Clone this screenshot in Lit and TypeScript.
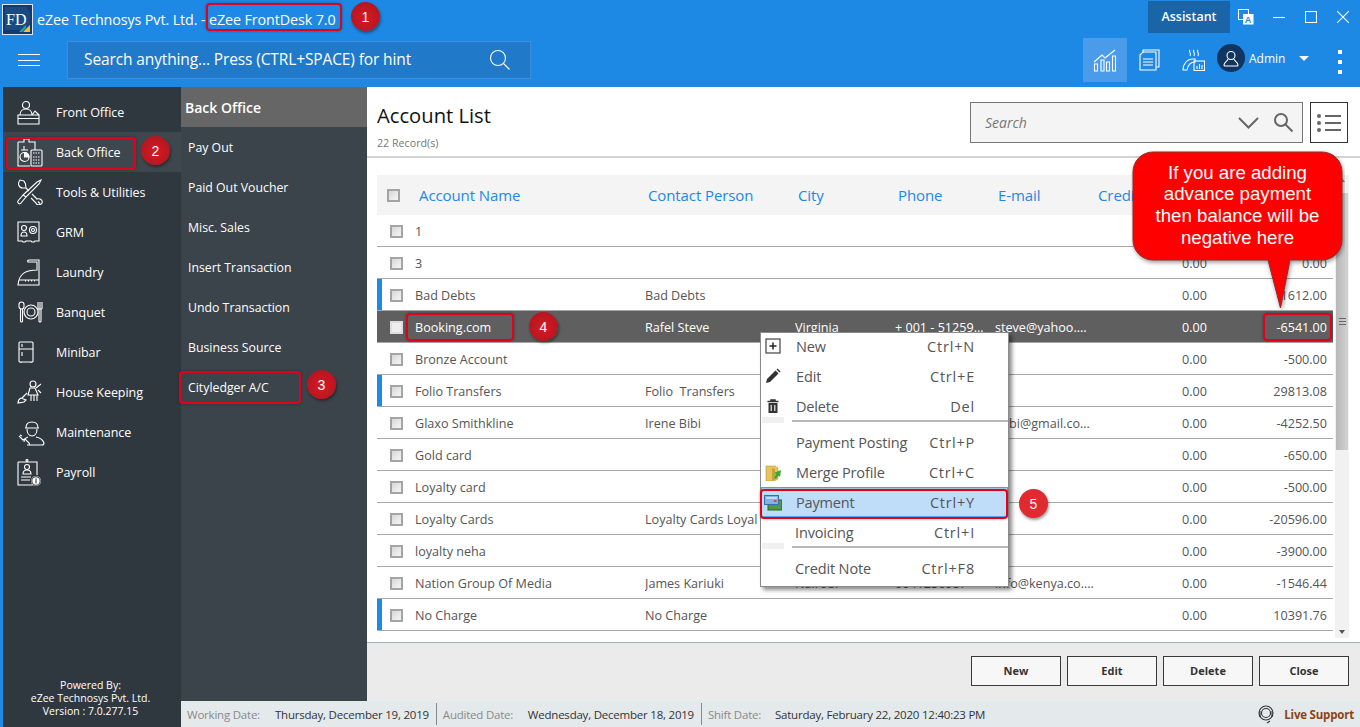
import { LitElement, html, css, svg } from "lit";
import { customElement } from "lit/decorators.js";

const I = (w: number, h: number, body: unknown, cls = "ic") =>
  html`<svg class=${cls} width=${w} height=${h} viewBox="0 0 ${w} ${h}">${body}</svg>`;

const navIcons: Record<string, unknown> = {
  front: svg`<circle cx="9" cy="5" r="3.500"/><path d="M3 15c0-4 3-6 6-6s6 2 6 6M15 15l3-4 4 4M1 15h21v9H1zM1 18.500h21"/>`,
  back: svg`<path d="M1 5h6V2h5v3h6v8M1 5v24h12M4 13h7M7 9v4"/><circle cx="7.500" cy="20" r="4.500"/><path d="M7.500 20v-4.500a4.500 4.500 0 0 1 4.500 4.500z" fill="#fff"/><rect x="14" y="13" width="11" height="16" rx="1"/><path d="M16 16h7M16 20h7M16 23h7M16 26h7" stroke-dasharray="1.500 1"/>`,
  tools: svg`<path d="M7 2 3 1C0 5 2 9 6 9l3 0 3 3M15 15l5 5c3-1 6 1 5 4-1 2-5 3-6 0l-5-5M21 22.500l2 2M9 9l-.5-4L7 2"/><path d="M24 1l-2 4L9 18l-3-2L20 3zM9 18l-5 6c-1 2-4 0-3-2l5-6"/>`,
  grm: svg`<path d="M1 2h21v19h-4l-1 1h-2l-1-1H9l-1 1H6l-1-1H1z"/><circle cx="7" cy="8" r="2.500"/><path d="M4 16c0-3 1-4 3-4s3 1 3 4zM4 16h6"/><circle cx="16" cy="10" r="3.500"/><circle cx="16" cy="10" r="1.500"/>`,
  laundry: svg`<path d="M12 2h10v17M12 2c-1 0-2 1-1 2h9v8c-9 0-18 2-19 15h21v-8"/><path d="M2 22h20M8 23h1M11 23h1M14 23h1M17 23h1"/>`,
  banquet: svg`<rect x="2" y="1" width="5" height="7" rx="2.500"/><path d="M3.500 8v12a1 1 0 0 0 2 0V8"/><circle cx="14" cy="11" r="7"/><circle cx="14" cy="11" r="4"/><path d="M21 1v7M23 1v7M25 1v7M21 8h4M22 8v12a1 1 0 0 0 2 0V8"/>`,
  minibar: svg`<rect x="2" y="1" width="14" height="20" rx="1"/><path d="M2 8h14M5 3v3M5 11v4M4 21v1M14 21v1"/>`,
  house: svg`<circle cx="16" cy="5" r="3"/><path d="M13 9l-2 7h10l-3-7zM19 9l5-4M21 11l3 3M10 14l-5 5M4 19c-2 1-3 3-3 5l6-1 2-2zM14 16v6M17 16v6M20 16v6"/>`,
  maint: svg`<path d="M9 9c0-4 2-6 6-6s6 2 6 6M8 9h14M10 10c0 4 2 7 5 7s5-3 5-7"/><path d="M11 18c-3 1-4 3-4 5M19 18c5 1 7 3 8 6 0 1-1 2-2 2H10"/><path d="M2 17l4 4 2-1 4 4c1 1 1 1 0 2M5 17l-2-1"/>`,
  payroll: svg`<path d="M1 3h19v13M1 3v23h15"/><circle cx="10" cy="1.500" r="1"/><circle cx="10" cy="8" r="2.500"/><path d="M6 15c0-3 1-4 4-4s4 1 4 4zM4 18h10M4 21h9"/><circle cx="19" cy="22" r="5" fill="#fff" stroke="none"/><circle cx="19" cy="22" r="4.200" stroke="#30383f"/><path d="M19 19.500v5" stroke="#30383f"/>`,
};

const nav = [
  ["Front Office", "front", 24, 25],
  ["Back Office", "back", 26, 30],
  ["Tools & Utilities", "tools", 26, 26],
  ["GRM", "grm", 24, 24],
  ["Laundry", "laundry", 24, 28],
  ["Banquet", "banquet", 26, 22],
  ["Minibar", "minibar", 18, 23],
  ["House Keeping", "house", 26, 26],
  ["Maintenance", "maint", 28, 27],
  ["Payroll", "payroll", 26, 27],
] as [string, string, number, number][];

const subs = ["Pay Out", "Paid Out Voucher", "Misc. Sales", "Insert Transaction", "Undo Transaction", "Business Source", "Cityledger A/C"];

type Row = { n: string; c?: string; ci?: string; p?: string; e?: string; cr: string; b: string; flag?: boolean; sel?: boolean };
const rows: Row[] = [
  { n: "1", cr: "", b: "" },
  { n: "3", cr: "0.00", b: "0.00" },
  { n: "Bad Debts", c: "Bad Debts", cr: "0.00", b: "-1612.00", flag: true },
  { n: "Booking.com", c: "Rafel Steve", ci: "Virginia", p: "+ 001 - 51259...", e: "steve@yahoo....", cr: "0.00", b: "-6541.00", sel: true },
  { n: "Bronze Account", cr: "0.00", b: "-500.00" },
  { n: "Folio Transfers", c: "Folio  Transfers", cr: "0.00", b: "29813.08", flag: true },
  { n: "Glaxo Smithkline", c: "Irene Bibi", e: "ibibi@gmail.co...", cr: "0.00", b: "-4252.50" },
  { n: "Gold card", cr: "0.00", b: "-650.00" },
  { n: "Loyalty card", cr: "0.00", b: "-500.00" },
  { n: "Loyalty Cards", c: "Loyalty Cards Loyal", cr: "0.00", b: "-20596.00" },
  { n: "loyalty neha", cr: "0.00", b: "-3900.00" },
  { n: "Nation Group Of Media", c: "James Kariuki", ci: "Nairobi", p: "0041256987", e: "info@kenya.co....", cr: "0.00", b: "-1546.44" },
  { n: "No Charge", c: "No Charge", cr: "0.00", b: "10391.76", flag: true },
];

const menuIcons = {
  new: svg`<rect x="1" y="1" width="14" height="14" fill="#fafafa" stroke="#444" stroke-width="1.200"/><path d="M8 4.500v7M4.500 8h7" stroke="#222" stroke-width="1.500"/>`,
  edit: svg`<path d="M1 15l1-4 8.500-8.500 3 3L5 14z" fill="#333"/><path d="M11.500 1.500l1-1 3 3-1 1z" fill="#333"/>`,
  del: svg`<path d="M1.500 3.500h11M5 3.500V2h4v1.500" stroke="#333" stroke-width="1.500" fill="none"/><path d="M2.500 5h9v10h-9z" fill="#333"/><path d="M5.200 7v6M8.800 7v6" stroke="#eee" stroke-width="1.200"/>`,
  merge: svg`<path d="M1 3h9l3 2v11l-4 2H1z" fill="#e6c35c" stroke="#b99a3a" stroke-width=".6"/><path d="M7 5l3 1v11l-3 1z" fill="#c9a23c"/><path d="M9 15l2-4-2-1 7-3-1 7-1.500-1.500L11 16z" fill="#3fa535"/>`,
  pay: svg`<rect x="4" y="6" width="14" height="10" fill="#4f9a4a" stroke="#1f6a27"/><rect x="0.500" y="1.500" width="14" height="9" fill="#7fb2e6" stroke="#3a6ea8"/><path d="M2 4h11" stroke="#dfeaf7" stroke-width="1.500"/><rect x="10" y="6" width="2.500" height="2" fill="#d4493a"/>`,
};

const menu = [
  { t: "New", k: "Ctrl+N", i: menuIcons.new, w: 16, h: 16 },
  { t: "Edit", k: "Ctrl+E", i: menuIcons.edit, w: 16, h: 16 },
  { t: "Delete", k: "Del", i: menuIcons.del, w: 14, h: 16, sep: true },
  { t: "Payment Posting", k: "Ctrl+P" },
  { t: "Merge Profile", k: "Ctrl+C", i: menuIcons.merge, w: 17, h: 18 },
  { t: "Payment", k: "Ctrl+Y", i: menuIcons.pay, w: 18, h: 17, on: true },
  { t: "Invoicing", k: "Ctrl+I", sep: true, shift: true },
  { t: "Credit Note", k: "Ctrl+F8", shift: true },
] as any[];

const marks = [
  ["m1", 1],
  ["m2", 2],
  ["m3", 3],
  ["m4", 4],
  ["m5", 5],
] as [string, number][];

@customElement("app-root")
export class AppRoot extends LitElement {
  static styles = css`
    :host { display: block; position: relative; width: 1360px; height: 727px; overflow: hidden;
      font-family: "Open Sans", "Noto Sans", sans-serif; font-size: 12px; color: #555; background: #fff; }
    * { box-sizing: border-box; }
    .ic { fill: none; stroke: #fff; stroke-width: 1.100; display: block; flex: none; }

    .titlebar { height: 38px; background: #1e88e5; display: flex; align-items: center; color: #fff; padding-left: 2px; }
    .logo { width: 31px; height: 31px; margin-right: 4px; flex: none; }
    .ttl { font-size: 14.300px; letter-spacing: -0.100px; white-space: pre; }
    .grow { flex: 1; }
    .assist { width: 82px; height: 32px; background: #1a65a8; font-size: 12.500px; font-weight: 600; display: flex; align-items: center; justify-content: center; margin-top: -5px; }
    .win { display: flex; align-items: center; margin-top: -5px; }
    .tr { margin: 0 19px 0 8px; }
    .win .ic { margin-right: 20px; }
    .win .ic:last-child { margin-right: 11px; }

    .toolbar { height: 49px; background: #1e88e5; display: flex; align-items: flex-start; color: #fff; }
    .burger { width: 22px; height: 12px; margin: 16px 27px 0 18px; border-top: 1px solid #fff; border-bottom: 1px solid #fff; position: relative; flex: none; }
    .burger::after { content: ""; position: absolute; left: 0; right: 0; top: 4.500px; height: 1px; background: #fff; }
    .search { width: 464px; height: 38px; margin-top: 3px; background: #2079c9; border: 1px solid #3b8fdc; display: flex; align-items: center; padding: 0 19px 0 16px; font-size: 15.500px; letter-spacing: -0.120px; }
    .search span { flex: 1; margin-top: -2px; }
    .tools { display: flex; align-items: flex-start; }
    .tb { width: 44px; height: 44px; display: flex; align-items: center; justify-content: center; }
    .tb.on { background: #4a9ceb; }
    .avatar { width: 28px; height: 28px; border-radius: 50%; background: #0f3560; display: flex; align-items: center; justify-content: center; margin: 6px 4px 0 2px; }
    .admin { font-size: 12px; margin: 12px 0 0 0; width: 50px; }
    .caret { width: 0; height: 0; border: 5px solid transparent; border-top: 5px solid #fff; border-bottom: 0; margin: 18px 0 0 0; }
    .dots { display: flex; flex-direction: column; gap: 6px; margin: 12px 18px 0 29px; }
    .dots i { width: 4px; height: 4px; background: #fff; display: block; }

    .body { display: flex; height: 640px; }
    .side { width: 181px; background: #30383f; border-left: 3px solid #1e88e5; color: #fff; display: flex; flex-direction: column; padding-top: 5px; flex: none; }
    .nav { height: 40px; display: flex; align-items: center; font-size: 12.500px; letter-spacing: -0.050px; position: relative; }
    .nav.on { background: #3f474e; box-shadow: -1px 0 0 #1e88e5; }
    .nav .slot { width: 53px; padding-left: 14px; display: flex; align-items: center; flex: none; }
    .foot { margin-top: auto; text-align: center; font-size: 10.500px; line-height: 13px; padding: 0 0 9px; margin-left: -3px; }

    .right { flex: 1; display: flex; flex-direction: column; min-width: 0; }
    .work { display: flex; height: 614px; }
    .sub { width: 186px; background: #3c444b; color: #fff; flex: none; }
    .subh { height: 40px; background: #666; font-size: 14px; font-weight: 600; display: flex; align-items: center; padding-left: 4px; }
    .subi { height: 40px; display: flex; align-items: center; padding-left: 7px; font-size: 12.300px; }

    .main { flex: 1; display: flex; flex-direction: column; min-width: 0; background: #fff; }
    .mh { height: 71px; border-bottom: 2px solid #d4d4d4; display: flex; padding: 15px 12px 0 10px; flex: none; }
    .mt { flex: 1; }
    .h1 { font-size: 20.200px; line-height: 26px; color: #111; margin: 0; font-weight: 400; }
    .rec { font-size: 10.700px; color: #777; margin-top: 8px; }
    .sbox { width: 333px; height: 41px; background: #f4f4f4; border: 1px solid #777; display: flex; align-items: center; padding: 0 8px 0 14px; font-style: italic; font-size: 14px; color: #777; }
    .sbox span { flex: 1; }
    .sbox .ic { stroke: #666; stroke-width: 2; }
    .lst { width: 38px; height: 41px; border: 1px solid #333; margin-left: 7px; display: flex; align-items: center; justify-content: center; }

    .tw { flex: 1; display: flex; padding: 17px 12px 0 10px; min-height: 0; gap: 2px; }
    .tbl { width: 956px; flex: none; }
    .row { display: grid; grid-template-columns: 38px 230px 150px 100px 100px 100px 112px 120px 6px; height: 32px; align-items: center; padding-top: 1px; border-bottom: 1px solid #a8a8a8; white-space: pre; font-size: 12.600px; color: #555; }
    .row.head { height: 40px; padding-top: 0; background: #f4f4f4; border: 0; font-size: 15px; color: #1e88e5; letter-spacing: -0.100px; }
    .row.head .h { padding-left: 3px; overflow: hidden; }
    .row.head .h.f { padding-left: 4px; }
    .row.flag { box-shadow: inset 5px 0 0 #1e88e5; }
    .row.sel { background: #5f5f5f; color: #fff; }
    .r { text-align: right; }
    .cb { width: 13px; height: 13px; border: 2px solid #a4a4a4; background: linear-gradient(135deg, #d8d8d8, #f5f5f5); margin-left: 13px; display: block; }
    .head .cb { margin-left: 10px; }
    .sel .cb { border-color: #ddd; background: #eee; }
    .cell { overflow: hidden; }
    .sb { width: 14px; height: 463px; background: #f1f1f1; position: relative; flex: none; }
    .thumb { position: absolute; left: 1px; right: 1px; top: 18px; height: 257px; background: linear-gradient(90deg, #b8b8b8, #d2d2d2); display: flex; align-items: center; justify-content: center; }
    .grip { width: 7px; height: 7px; border-top: 1px solid #666; border-bottom: 1px solid #666; position: relative; }
    .grip::after { content: ""; position: absolute; left: 0; right: 0; top: 2px; height: 1px; background: #666; }
    .arr { position: absolute; left: 4px; width: 0; height: 0; border: 3px solid transparent; }
    .arr.up { top: 3px; border-bottom: 4px solid #888; border-top: 0; }
    .arr.dn { bottom: 4px; border-top: 4px solid #555; border-bottom: 0; }

    .bot { height: 59px; border-top: 1px solid #aab0b4; background: #ebebeb; display: flex; justify-content: flex-end; gap: 6px; padding: 13px 11px 0 0; flex: none; margin-top: auto; }
    .btn { width: 90px; height: 30px; background: #f7f7f7; border: 1px solid #3a3a3a; font-size: 11px; font-weight: 700; color: #333; display: flex; align-items: center; justify-content: center; padding-bottom: 2px; }

    .status { height: 26px; background: #e4e9ec; display: flex; align-items: center; font-size: 11.500px; color: #333; padding-left: 6px; white-space: nowrap; letter-spacing: -0.220px; }
    .status .lb { color: #8a8a8a; }
    .status .v1 { width: 88px; }
    .status .v2 { width: 85px; }
    .status .v3 { width: 67px; }
    .div { width: 1px; height: 22px; background: #888; margin: 0 6px 0 7px; }
    .ls { color: #8b4513; font-weight: 700; margin: 0 6px 0 9px; letter-spacing: -0.200px; }
    .status .ic { stroke: #333; }
    .status .lsi { margin-left: auto; }

    .menu { position: absolute; left: 760px; top: 332px; width: 249px; height: 255px; background: #fff; border: 1px solid #8a8a8a; box-shadow: 3px 3px 4px rgba(0,0,0,.45); display: flex; flex-direction: column; color: #555; font-size: 14.500px; }
    .mi { height: 30px; display: grid; grid-template-columns: 35px 1fr auto; align-items: center; padding-right: 33px; flex: none; letter-spacing: -0.150px; }
    .mi:first-child { margin-top: -2px; }
    .mi.on { background: #bfdcf8; box-shadow: inset 0 0 0 1px #5ba4ee; height: 30px; }
    .mi.shift { margin-left: -1px; }
    .mi .k { letter-spacing: 0.800px; }
    .mi .mic { display: flex; justify-content: center; padding-left: 2px; width: 22px; }
    .msep { height: 2px; margin: -1px 0 5px 31px; background: #b8b8b8; flex: none; position: relative; }
    .msep::before { content: ""; position: absolute; left: -30px; width: 22px; top: -3px; height: 6px; background: #f0f0f0; }

    .ann { position: absolute; border: 2px solid #e3001b; border-radius: 4px; pointer-events: none; box-shadow: 0 0 3px rgba(0,0,0,.35); }
    .a1 { left: 206px; top: 3px; width: 136px; height: 28px; }
    .a2 { left: 6px; top: 137px; width: 130px; height: 33px; }
    .a3 { left: 179px; top: 371px; width: 122px; height: 33px; }
    .a4 { left: 406px; top: 313px; width: 108px; height: 28px; }
    .a5 { left: 1263px; top: 313px; width: 69px; height: 28px; }
    .a6 { left: 760px; top: 489px; width: 248px; height: 30px; }
    .badge { position: absolute; width: 29px; height: 29px; border-radius: 50%; color: #fff; display: flex; align-items: center; justify-content: center; font-size: 14px; background: radial-gradient(circle at 50% 55%, #d81a22, #a81420); box-shadow: 1px 2px 3px rgba(0,0,0,.4); font-family: "Liberation Sans", sans-serif; }
    .m1 { left: 351px; top: 2px; }
    .m2 { left: 141px; top: 136px; }
    .m3 { left: 307px; top: 370px; }
    .m4 { left: 529px; top: 312px; }
    .m5 { left: 1019px; top: 489px; background: #e02a2f; }

    .callout { position: absolute; left: 1131px; top: 150px; width: 214px; height: 160px; }
    .cpath { fill: #f00; stroke: #8a3030; stroke-width: 1; filter: drop-shadow(1px 2px 2px rgba(0,0,0,.4)); }
    .ctext { position: absolute; left: 2px; top: 0px; width: 209px; height: 110px; display: flex; align-items: center; justify-content: center; text-align: center; color: #fff; font: 18.670px/21.700px "Liberation Sans", sans-serif; }
  `;

  render() {
    return html`
      <div class="titlebar">
        <svg class="logo" viewBox="0 0 31 31">
          <rect x=".5" y=".5" width="30" height="30" fill="#123a6b" stroke="#dfe8f2"/>
          <path d="M3 3h21l4 5v18H3z" fill="#1a4a82"/>
          <path d="M21 28l7-7v7z" fill="#e8c23a"/><path d="M17 28l7-7v3l-4 4z" fill="#2ba3a0"/>
          <text x="4" y="21" font-family="Liberation Serif" font-size="16" fill="#fff">FD</text>
        </svg>
        <span class="ttl">eZee Technosys Pvt. Ltd. - eZee FrontDesk 7.0</span>
        <span class="grow"></span>
        <div class="assist">Assistant</div>
        <div class="win">
          <svg class="tr" width="16" height="16" viewBox="0 0 16 16" >
            <rect x="0.500" y="0.500" width="10" height="10" fill="#1e88e5" stroke="#fff"/>
            <rect x="5" y="5" width="10.500" height="10.500" fill="#fff"/>
            <text x="6.800" y="14" font-size="9" font-family="Liberation Sans" font-weight="700" fill="#1e88e5">A</text>
          </svg>
          ${I(12, 12, svg`<path d="M0 6.500h12"/>`)}
          ${I(12, 12, svg`<rect x=".5" y=".5" width="11" height="11"/>`)}
          ${I(12, 12, svg`<path d="M0 0l12 12M12 0L0 12"/>`)}
        </div>
      </div>
      <div class="toolbar">
        <div class="burger"></div>
        <div class="search"><span>Search anything... Press (CTRL+SPACE) for hint</span>
          ${I(22, 22, svg`<circle cx="9" cy="9" r="7.500"/><path d="M14.500 14.500l6 6"/>`)}
        </div>
        <span class="grow"></span>
        <div class="tools">
          <div class="tb on">${I(24, 23, svg`<path d="M1 13L9 6l3 3 5-4 5-4"/><path d="M1.500 15h3v7h-3zM8 11h3v11H8zM13.500 13h3v9h-3zM19.500 7h3v15h-3z"/>`)}</div>
          <div class="tb">${I(21, 22, svg`<path d="M4 4V1h16v17h-3"/><path d="M4 3h13v18H1V6z"/><path d="M4 10h10M4 13h10M4 16h10"/>`)}</div>
          <div class="tb">${I(23, 22, svg`<path d="M8 1c-2 2 2 3 0 6M12 1c-2 2 2 3 0 6M16 1c-2 2 2 3 0 6"/><path d="M1 21c0-6 4-11 10-11h2v3c-4 0-7 3-8 8z"/><rect x="12" y="12" width="10.500" height="9.500"/><path d="M15 20v-3M17.500 20v-5M20 20v-4"/>`)}</div>
          <div class="avatar">${I(16, 17, svg`<circle cx="8" cy="5.500" r="4"/><path d="M5 9c0 2-4 3-4 6 0 1 1 1 1 1h12s1 0 1-1c0-3-4-4-4-6"/>`)}</div>
          <div class="admin">Admin</div>
          <div class="caret"></div>
          <div class="dots"><i></i><i></i><i></i></div>
        </div>
      </div>
      <div class="body">
        <div class="side">
          ${nav.map(([t, k, w, h]) => html`<div class="nav ${t === "Back Office" ? "on" : ""}">
            <div class="slot">${I(w, h, navIcons[k])}</div>${t}</div>`)}
          <div class="foot">Powered By:<br />eZee Technosys Pvt. Ltd.<br />Version : 7.0.277.15</div>
        </div>
        <div class="right">
          <div class="work">
            <div class="sub">
              <div class="subh">Back Office</div>
              ${subs.map((s) => html`<div class="subi">${s}</div>`)}
            </div>
            <div class="main">
              <div class="mh">
                <div class="mt"><h1 class="h1">Account List</h1><div class="rec">22 Record(s)</div></div>
                <div class="sbox"><span>Search</span>
                  ${I(22, 12, svg`<path d="M1 1l9.500 9.500L20 1"/>`)}
                  <span style="flex:none;width:13px"></span>
                  ${I(21, 21, svg`<circle cx="8" cy="8" r="6"/><path d="M12.500 12.500l7 7"/>`)}
                </div>
                <div class="lst">
                  <svg width="26" height="20" viewBox="0 0 26 20"><g fill="#666"><circle cx="3" cy="3" r="2"/><circle cx="3" cy="10" r="2"/><circle cx="3" cy="17" r="2"/><rect x="9" y="2" width="16" height="2"/><rect x="9" y="9" width="16" height="2"/><rect x="9" y="16" width="16" height="2"/></g></svg>
                </div>
              </div>
              <div class="tw">
                <div class="tbl">
                  <div class="row head"><i class="cb"></i>
                    <div class="h f">Account Name</div><div class="h">Contact Person</div><div class="h">City</div><div class="h">Phone</div><div class="h">E-mail</div><div class="h">Credit</div><div class="h r">Balance</div>
                  </div>
                  ${rows.map((r) => html`<div class="row ${r.flag ? "flag" : ""} ${r.sel ? "sel" : ""}">
                    <i class="cb"></i>
                    <div class="cell">${r.n}</div><div class="cell">${r.c ?? ""}</div><div class="cell">${r.ci ?? ""}</div><div class="cell">${r.p ?? ""}</div><div class="cell">${r.e ?? ""}</div>
                    <div class="r">${r.cr}</div><div class="r">${r.b}</div>
                  </div>`)}
                </div>
                <div class="sb"><i class="arr up"></i><div class="thumb"><i class="grip"></i></div><i class="arr dn"></i></div>
              </div>
              <div class="bot">
                ${["New", "Edit", "Delete", "Close"].map((b) => html`<div class="btn">${b}</div>`)}
              </div>
            </div>
          </div>
          <div class="status">
            <span class="lb v1">Working Date:</span><span>Thursday, December 19, 2019</span><i class="div"></i>
            <span class="lb v2">Audited Date:</span><span>Wednesday, December 18, 2019</span><i class="div"></i>
            <span class="lb v3">Shift Date:</span><span>Saturday, February 22, 2020 12:40:23 PM</span>
            <span class="lsi">${I(18, 22, svg`<circle cx="9" cy="10" r="7"/><circle cx="9" cy="10" r="4.500"/><path d="M3 8v6M15 8v6M13 18l-3 2"/>`)}</span>
            <span class="ls">Live Support</span>
          </div>
        </div>
      </div>

      <div class="menu">
        ${menu.map((m) => html`
          <div class="mi ${m.on ? "on" : ""} ${m.shift ? "shift" : ""}">
            <div class="mic">${m.i ? html`<svg width=${m.w} height=${m.h} viewBox="0 0 ${m.w} ${m.h}">${m.i}</svg>` : ""}</div>
            <span>${m.t}</span><span class="k">${m.k}</span>
          </div>
          ${m.sep ? html`<div class="msep"></div>` : ""}`)}
      </div>

      <div class="callout">
        <svg width="214" height="160" viewBox="0 0 214 160"><path class="cpath" d="M22 2h169a20 20 0 0 1 20 20v68a20 20 0 0 1-20 20H159l-9.500 48L137 110H22A20 20 0 0 1 2 90V22A20 20 0 0 1 22 2z"/></svg>
        <div class="ctext">If you are adding<br />advance payment<br />then balance will be<br />negative here</div>
      </div>

      <i class="ann a1"></i><i class="ann a2"></i><i class="ann a3"></i><i class="ann a4"></i><i class="ann a5"></i><i class="ann a6"></i>
      ${marks.map(([c, n]) => html`<div class="badge ${c}">${n}</div>`)}
    `;
  }
}
